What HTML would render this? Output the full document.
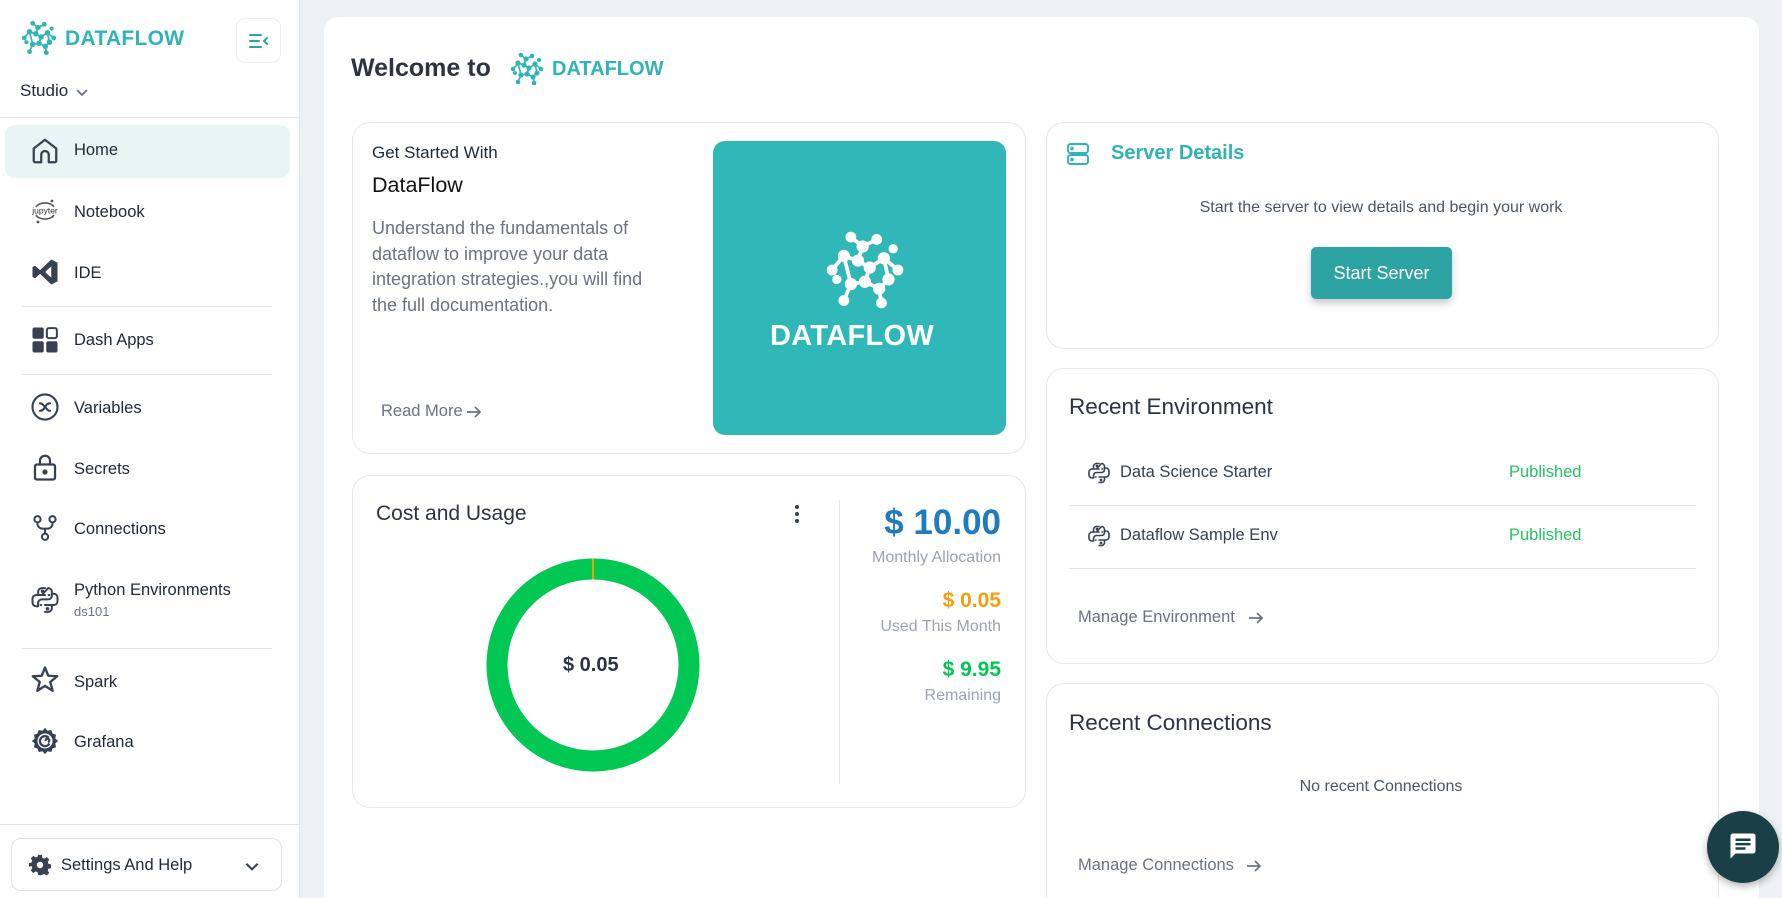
<!DOCTYPE html>
<html style="width:1782px;height:898px;overflow:hidden"><head><meta charset="utf-8"><style>
*{box-sizing:border-box;margin:0;padding:0}
html,body{width:1782px;height:898px;overflow:hidden}
body{background:#eef1f4;font-family:"Liberation Sans",Arial,sans-serif;position:relative;color:#1f2937}
.a{position:absolute;white-space:nowrap}
.side{position:absolute;left:0;top:0;width:300px;height:898px;background:#fff;border-right:1px solid #e5e7eb}
.hr{position:absolute;height:1px;background:#e5e7eb}
.nav{position:absolute;left:74px;font-size:16.5px;color:#1f2937}
.ic{position:absolute;left:30px;width:30px;height:30px}
.card{position:absolute;background:#fff;border:1px solid #e6e8eb;border-radius:18px}
</style></head><body>
<svg width="0" height="0" style="position:absolute"><defs>
<g id="logo">
<g stroke="currentColor" stroke-width="1.6" fill="none">
<path d="M14 6 L19 10 L25 7 M19 10 L17 16 L11 14 L6 20 M17 16 L22 19 L28 15 L34 20 M22 19 L20 25 L14 26 L11 33 M20 25 L26 28 L27 34 M28 15 L30 24 L26 28 M11 14 L14 26"/>
</g>
<g fill="currentColor">
<circle cx="14" cy="6" r="2.3"/><circle cx="25" cy="7" r="2.3"/><circle cx="19" cy="10" r="2.6"/>
<circle cx="11" cy="14" r="2.6"/><circle cx="17" cy="16" r="2.6"/><circle cx="28" cy="15" r="2.6"/>
<circle cx="6" cy="20" r="2.3"/><circle cx="22" cy="19" r="2.6"/><circle cx="34" cy="20" r="2.3"/>
<circle cx="30" cy="24" r="2.6"/><circle cx="14" cy="26" r="2.6"/><circle cx="20" cy="25" r="2.6"/>
<circle cx="26" cy="28" r="2.6"/><circle cx="11" cy="33" r="2.3"/><circle cx="27" cy="34" r="2.3"/>
<circle cx="8" cy="24" r="2"/><circle cx="32" cy="11" r="2"/>
</g></g>
<g id="py" fill="none" stroke="#374151" stroke-width="1.6" stroke-linejoin="round" stroke-linecap="round">
<path d="M12 2.5h-2.5a3 3 0 0 0-3 3V8h5.5M15 8h.5M9.5 8H5a3 3 0 0 0-3 3v3a3 3 0 0 0 3 3h1.5v-2.5a3 3 0 0 1 3-3h5a3 3 0 0 0 3-3V5.5a3 3 0 0 0-3-3z"/>
<path d="M12 21.5h2.5a3 3 0 0 0 3-3V16H12M9 16h-.5M14.5 16H19a3 3 0 0 0 3-3v-3a3 3 0 0 0-3-3h-1.5"/>
<circle cx="10" cy="5" r=".6" fill="#374151"/><circle cx="14" cy="19" r=".6" fill="#374151"/>
</g>
</defs></svg>

<!-- Sidebar -->
<div class="side">
  <svg class="a" style="left:18px;top:17px;color:#2fb5b5" width="42" height="42" viewBox="0 0 40 40"><use href="#logo"/></svg>
  <div class="a" style="left:65px;top:27px;font-size:21px;font-weight:bold;color:#2fb5b5;letter-spacing:0.3px">DATAFLOW</div>
  <div class="a" style="left:236px;top:18px;width:45px;height:45px;border:1px solid #eef0f2;border-radius:9px"></div>
  <svg class="a" style="left:247px;top:29px" width="24" height="24" viewBox="0 0 24 24" fill="none" stroke="#2fa3a3" stroke-width="2" stroke-linecap="round"><path d="M3 6h11M3 12h9M3 18h11M20 9l-3 3 3 3"/></svg>
  <div class="a" style="left:20px;top:81px;font-size:17px;color:#1f2937">Studio</div>
  <svg class="a" style="left:74px;top:84px" width="16" height="16" viewBox="0 0 16 16" fill="none" stroke="#6b7280" stroke-width="1.8"><path d="M3 6l5 5 5-5"/></svg>
  <div class="hr" style="left:0;top:117px;width:300px"></div>

  <div class="a" style="left:5px;top:125px;width:285px;height:53px;background:#e8f5f4;border-radius:10px"></div>
  <svg class="ic" style="top:136px" viewBox="0 0 24 24" fill="none" stroke="#374151" stroke-width="1.8" stroke-linejoin="round"><path d="M3 10l9-7 9 7v10a1 1 0 0 1-1 1h-5v-6a3 3 0 0 0-6 0v6H4a1 1 0 0 1-1-1z"/></svg>
  <div class="nav" style="top:141px">Home</div>

  <svg class="ic" style="top:196px" viewBox="0 0 30 30"><path d="M6 11a9.5 6 0 0 1 18 0" fill="none" stroke="#555" stroke-width="1.6"/><path d="M6 19a9.5 6 0 0 0 18 0" fill="none" stroke="#555" stroke-width="1.6"/><text x="15" y="17.5" font-size="8.5" text-anchor="middle" fill="#333" font-family="Liberation Sans">jupyter</text><circle cx="22" cy="5" r="1.4" fill="#555"/><circle cx="8" cy="26" r="1.4" fill="#555"/></svg>
  <div class="nav" style="top:203px">Notebook</div>

  <svg class="ic" style="top:257px" viewBox="0 0 24 24"><path d="M17 2l5 2.5v15L17 22 8 13.5 4 17 2 16V8l2-1 4 3.5zM17 7.5l-5 4.5 5 4.5z" fill="#374151"/></svg>
  <div class="nav" style="top:264px">IDE</div>
  <div class="hr" style="left:22px;top:306px;width:250px"></div>

  <svg class="ic" style="top:325px" viewBox="0 0 24 24" fill="#374151"><rect x="2" y="2" width="9" height="9" rx="1.5"/><rect x="13.5" y="2.5" width="8" height="8" rx="1.5" fill="none" stroke="#374151" stroke-width="1.6"/><rect x="2" y="13" width="9" height="9" rx="1.5"/><rect x="13" y="13" width="9" height="9" rx="1.5"/></svg>
  <div class="nav" style="top:331px">Dash Apps</div>
  <div class="hr" style="left:22px;top:374px;width:250px"></div>

  <svg class="ic" style="top:392px" viewBox="0 0 24 24" fill="none" stroke="#374151" stroke-width="1.7"><circle cx="12" cy="12" r="10"/><path d="M8 9c2 0 2 1 4 3s2 3 4 3M16 9c-2 0-3 1-4 3s-2 3-4 3" stroke-linecap="round"/></svg>
  <div class="nav" style="top:399px">Variables</div>

  <svg class="ic" style="top:452px" viewBox="0 0 24 24" fill="none" stroke="#374151" stroke-width="1.8"><rect x="4" y="10" width="16" height="12" rx="1.5"/><path d="M8 10V7a4 4 0 0 1 8 0v3"/><circle cx="12" cy="16" r="1.2" fill="#374151"/></svg>
  <div class="nav" style="top:460px">Secrets</div>

  <svg class="ic" style="top:513px" viewBox="0 0 24 24" fill="none" stroke="#374151" stroke-width="1.6"><circle cx="6" cy="5" r="2.5"/><circle cx="18" cy="5" r="2.5"/><circle cx="12" cy="19" r="2.5"/><path d="M6 7.5v1a4 4 0 0 0 4 4h4a4 4 0 0 0 4-4v-1M12 12.5v4"/></svg>
  <div class="nav" style="top:520px">Connections</div>

  <svg class="ic" style="top:585px" viewBox="0 0 24 24"><use href="#py"/></svg>
  <div class="nav" style="top:581px">Python Environments</div>
  <div class="a" style="left:74px;top:604px;font-size:13px;color:#6b7280">ds101</div>
  <div class="hr" style="left:22px;top:648px;width:250px"></div>

  <svg class="ic" style="top:665px" viewBox="0 0 24 24" fill="none" stroke="#374151" stroke-width="1.9" stroke-linejoin="round"><path d="M12 2l2.6 6.6 7.2.4-5.6 4.6 1.9 7-6.1-3.9-6.1 3.9 1.9-7L2.2 9l7.2-.4z"/></svg>
  <div class="nav" style="top:673px">Spark</div>

  <svg class="ic" style="top:726px" viewBox="0 0 24 24"><path d="M12 1.5l2 2.3 3-.6 1 2.8 2.8 1-.6 3 2.3 2-2.3 2 .6 3-2.8 1-1 2.8-3-.6-2 2.3-2-2.3-3 .6-1-2.8-2.8-1 .6-3L1.5 12l2.3-2-.6-3 2.8-1 1-2.8 3 .6z" fill="#374151"/><circle cx="12" cy="12" r="6" fill="#fff"/><path d="M15 9.5A4 4 0 1 0 15.5 14M12.5 12a1.5 1.5 0 1 1 2 1" fill="none" stroke="#374151" stroke-width="1.8"/></svg>
  <div class="nav" style="top:733px">Grafana</div>

  <div class="hr" style="left:0;top:824px;width:300px"></div>
  <div class="a" style="left:11px;top:838px;width:271px;height:53px;border:1px solid #dfe2e6;border-radius:10px"></div>
  <svg class="a" style="left:29px;top:854px" width="22" height="22" viewBox="0 0 24 24"><path d="M10 1h4l.6 3.1 2 .9 2.7-1.7 2.8 2.8-1.7 2.7.9 2 3.1.6v4l-3.1.6-.9 2 1.7 2.7-2.8 2.8-2.7-1.7-2 .9L14 23h-4l-.6-3.1-2-.9-2.7 1.7-2.8-2.8 1.7-2.7-.9-2L-.4 14v-4l3.1-.6.9-2L1.9 4.8l2.8-2.8 2.7 1.7 2-.9z" fill="#374151"/><circle cx="12" cy="12" r="3.5" fill="#fff"/></svg>
  <div class="a" style="left:61px;top:856px;font-size:16.5px;color:#1f2937">Settings And Help</div>
  <svg class="a" style="left:243px;top:857px" width="18" height="18" viewBox="0 0 16 16" fill="none" stroke="#374151" stroke-width="1.8"><path d="M3 6l5 5 5-5"/></svg>
</div>

<!-- Main panel -->
<div class="a" style="left:324px;top:17px;width:1435px;height:881px;background:#fff;border-radius:14px 14px 0 0"></div>
<div class="a" style="left:351px;top:54px;font-size:25px;font-weight:bold;color:#2d3342">Welcome to</div>
<svg class="a" style="left:507px;top:49px;color:#2fb5b5" width="40" height="40" viewBox="0 0 40 40"><use href="#logo"/></svg>
<div class="a" style="left:552px;top:58px;font-size:20px;font-weight:bold;color:#2fb5b5">DATAFLOW</div>

<!-- Get started card -->
<div class="card" style="left:352px;top:122px;width:674px;height:332px"></div>
<div class="a" style="left:372px;top:143px;font-size:17px;color:#1f2937">Get Started With</div>
<div class="a" style="left:372px;top:173px;font-size:21.5px;color:#111">DataFlow</div>
<div class="a" style="left:372px;top:216px;font-size:18px;line-height:25.5px;color:#6b7280;white-space:normal;width:300px">Understand the fundamentals of dataflow to improve your data integration strategies.,you will find the full documentation.</div>
<div class="a" style="left:381px;top:402px;font-size:16.5px;color:#6b7280">Read More</div>
<svg class="a" style="left:465px;top:403px" width="18" height="18" viewBox="0 0 18 18" fill="none" stroke="#6b7280" stroke-width="1.7"><path d="M2 9h13M10 4l5 5-5 5"/></svg>
<div class="a" style="left:713px;top:141px;width:293px;height:294px;background:#30b8b8;border-radius:12px"></div>
<svg class="a" style="left:818px;top:223px;color:#fff" width="94" height="94" viewBox="0 0 40 40"><use href="#logo"/></svg>
<div class="a" style="left:770px;top:320px;font-size:29px;font-weight:bold;color:#fff;letter-spacing:0.3px">DATAFLOW</div>

<!-- Cost card -->
<div class="card" style="left:352px;top:475px;width:674px;height:333px"></div>
<div class="a" style="left:376px;top:502px;font-size:21px;color:#2d3342">Cost and Usage</div>
<svg class="a" style="left:789px;top:503px" width="16" height="22" viewBox="0 0 16 22" fill="#374151"><circle cx="8" cy="4" r="2"/><circle cx="8" cy="11" r="2"/><circle cx="8" cy="18" r="2"/></svg>
<svg class="a" style="left:483px;top:555px" width="220" height="220" viewBox="0 0 220 220"><circle cx="110" cy="110" r="96" fill="none" stroke="#00c853" stroke-width="21"/><path d="M110 3.5v21" stroke="#e6a500" stroke-width="2"/></svg>
<div class="a" style="left:563px;top:654px;font-size:20px;font-weight:bold;color:#2d3342">$ 0.05</div>
<div class="a" style="left:839px;top:500px;width:1px;height:284px;background:#e5e7eb"></div>
<div class="a" style="right:781px;top:503px;font-size:35px;font-weight:bold;color:#1f7bc0">$ 10.00</div>
<div class="a" style="right:781px;top:549px;font-size:16px;color:#9ca3af">Monthly Allocation</div>
<div class="a" style="right:781px;top:589px;font-size:21px;font-weight:bold;color:#f59e0b">$ 0.05</div>
<div class="a" style="right:781px;top:618px;font-size:16px;color:#9ca3af">Used This Month</div>
<div class="a" style="right:781px;top:658px;font-size:21px;font-weight:bold;color:#00c853">$ 9.95</div>
<div class="a" style="right:781px;top:687px;font-size:16px;color:#9ca3af">Remaining</div>

<!-- Server card -->
<div class="card" style="left:1046px;top:122px;width:673px;height:227px"></div>
<svg class="a" style="left:1066px;top:142px" width="24" height="24" viewBox="0 0 24 24" fill="none" stroke="#2fb5b5" stroke-width="1.9"><rect x="2" y="2" width="20" height="9" rx="2.5"/><rect x="2" y="13" width="20" height="9" rx="2.5"/><circle cx="6" cy="6.5" r=".8" fill="#2fb5b5"/><circle cx="6" cy="17.5" r=".8" fill="#2fb5b5"/></svg>
<div class="a" style="left:1111px;top:142px;font-size:20px;font-weight:bold;color:#2fb5b5">Server Details</div>
<div class="a" style="left:1381px;top:199px;transform:translateX(-50%);font-size:16px;color:#4b5563">Start the server to view details and begin your work</div>
<div class="a" style="left:1311px;top:247px;width:141px;height:52px;background:#2ea3a3;border-radius:5px;box-shadow:0 4px 8px rgba(0,0,0,.22);color:#fff;font-size:18px;text-align:center;line-height:52px">Start Server</div>

<!-- Recent env -->
<div class="card" style="left:1046px;top:368px;width:673px;height:296px"></div>
<div class="a" style="left:1069px;top:394px;font-size:22.5px;color:#2d3342">Recent Environment</div>
<svg class="a" style="left:1087px;top:461px" width="24" height="24" viewBox="0 0 24 24"><use href="#py"/></svg>
<div class="a" style="left:1120px;top:463px;font-size:16.5px;color:#374151">Data Science Starter</div>
<div class="a" style="left:1509px;top:463px;font-size:16.5px;color:#22c55e">Published</div>
<div class="hr" style="left:1069px;top:505px;width:627px"></div>
<svg class="a" style="left:1087px;top:524px" width="24" height="24" viewBox="0 0 24 24"><use href="#py"/></svg>
<div class="a" style="left:1120px;top:526px;font-size:16.5px;color:#374151">Dataflow Sample Env</div>
<div class="a" style="left:1509px;top:526px;font-size:16.5px;color:#22c55e">Published</div>
<div class="hr" style="left:1069px;top:568px;width:627px"></div>
<div class="a" style="left:1078px;top:608px;font-size:16.5px;color:#6b7280">Manage Environment</div>
<svg class="a" style="left:1247px;top:609px" width="18" height="18" viewBox="0 0 18 18" fill="none" stroke="#6b7280" stroke-width="1.7"><path d="M2 9h13M10 4l5 5-5 5"/></svg>

<!-- Recent connections -->
<div class="card" style="left:1046px;top:683px;width:673px;height:230px"></div>
<div class="a" style="left:1069px;top:710px;font-size:22.5px;color:#2d3342">Recent Connections</div>
<div class="a" style="left:1381px;top:778px;transform:translateX(-50%);font-size:16px;color:#4b5563">No recent Connections</div>
<div class="a" style="left:1078px;top:856px;font-size:16.5px;color:#6b7280">Manage Connections</div>
<svg class="a" style="left:1245px;top:857px" width="18" height="18" viewBox="0 0 18 18" fill="none" stroke="#6b7280" stroke-width="1.7"><path d="M2 9h13M10 4l5 5-5 5"/></svg>

<!-- Chat -->
<div class="a" style="left:1707px;top:811px;width:72px;height:72px;border-radius:50%;background:#1b3f47;box-shadow:0 3px 8px rgba(0,0,0,.3)"></div>
<svg class="a" style="left:1728px;top:831px" width="30" height="30" viewBox="0 0 24 24"><path d="M4 2h16a2 2 0 0 1 2 2v12a2 2 0 0 1-2 2H6l-4 4V4a2 2 0 0 1 2-2z" fill="#fff"/><path d="M6 7h12M6 10.5h12M6 14h8" stroke="#1b3f47" stroke-width="2"/></svg>
</body></html>
